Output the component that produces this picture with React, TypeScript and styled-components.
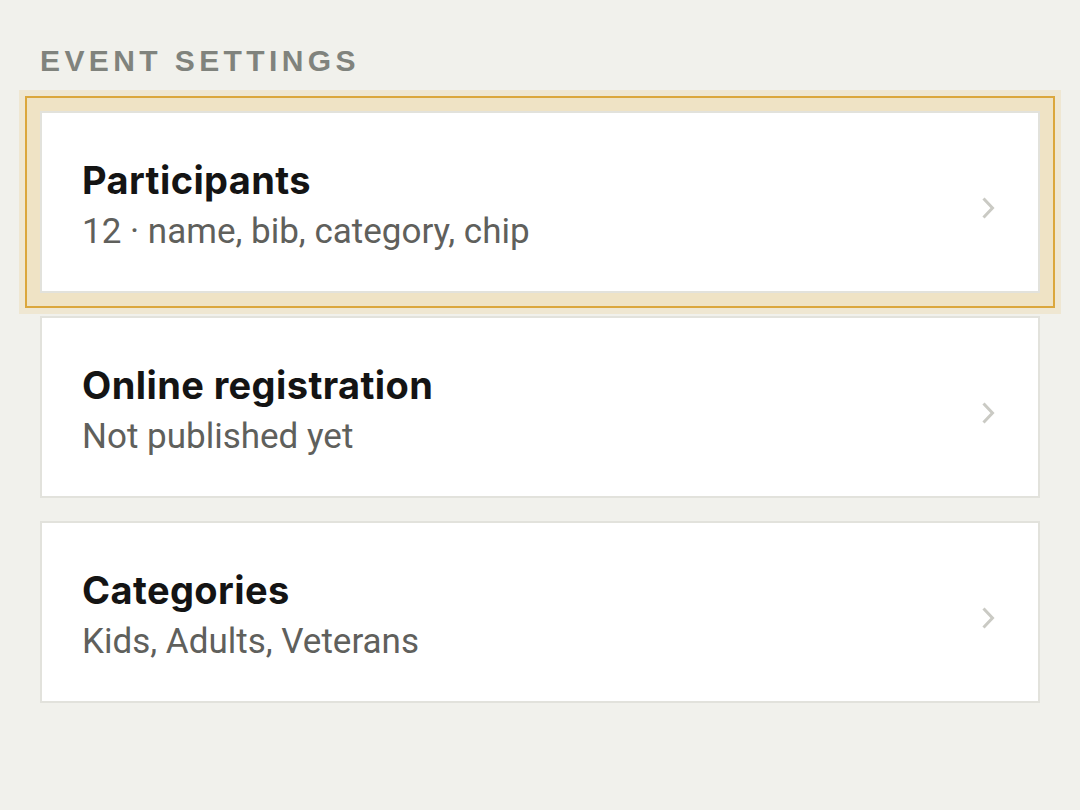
import React from "react";
import styled, { createGlobalStyle } from "styled-components";

const GlobalStyle = createGlobalStyle`
  html, body {
    margin: 0;
    padding: 0;
    background: #f1f1ec;
  }
  * {
    box-sizing: border-box;
  }
`;

interface Setting {
  id: string;
  title: string;
  detail: string;
}

const settings: Setting[] = [
  { id: "participants", title: "Participants", detail: "12 · name, bib, category, chip" },
  { id: "registration", title: "Online registration", detail: "Not published yet" },
  { id: "categories", title: "Categories", detail: "Kids, Adults, Veterans" },
];

function Chevron() {
  return (
    <ChevronIcon width="14" height="22" viewBox="0 0 14 22" aria-hidden="true">
      <polyline points="2.5,1.5 11.5,11 2.5,20.5" fill="none" stroke="#cacac4" strokeWidth="3" />
    </ChevronIcon>
  );
}

export default function App() {
  return (
    <>
      <GlobalStyle />
      <Page>
        <Heading>Event settings</Heading>
        <List>
          {settings.map((s, i) => (
            <Card key={s.id} $focused={i === 0}>
              <Texts>
                <Title>{s.title}</Title>
                <Detail>{s.detail}</Detail>
              </Texts>
              <Chevron />
            </Card>
          ))}
        </List>
      </Page>
    </>
  );
}

const Page = styled.div`
  min-height: 810px;
  padding: 44px 40px 40px;
  background: #f1f1ec;
`;

const Heading = styled.h2`
  margin: 0 0 33px;
  font-family: "Liberation Sans", Arial, sans-serif;
  font-size: 30px;
  line-height: 34px;
  font-weight: 700;
  letter-spacing: 4.4px;
  text-transform: uppercase;
  color: #80837d;
`;

const List = styled.div`
  display: flex;
  flex-direction: column;
  gap: 23px;
`;

const Card = styled.button<{ $focused?: boolean }>`
  display: flex;
  align-items: center;
  justify-content: space-between;
  width: 1000px;
  height: 182px;
  padding: 6px 42px 0 40px;
  background: #ffffff;
  border: 2px solid #e2e2dc;
  text-align: left;
  cursor: pointer;
  box-shadow: ${(p) =>
    p.$focused
      ? "0 0 0 13px #efe3c5, 0 0 0 15px #dba73d, 0 0 0 21px #efe7d2"
      : "none"};
`;

const Texts = styled.div`
  display: flex;
  flex-direction: column;
  gap: 9px;
`;

const Title = styled.div`
  font-family: Inter, "Liberation Sans", Arial, sans-serif;
  font-size: 38px;
  line-height: 44px;
  font-weight: 700;
  letter-spacing: 0.4px;
  color: #141414;
`;

const Detail = styled.div`
  font-family: Roboto, "Liberation Sans", sans-serif;
  font-size: 35px;
  line-height: 42px;
  color: #5f605c;
`;

const ChevronIcon = styled.svg`
  flex: none;
  margin: 6px 1px 0 0;
`;
